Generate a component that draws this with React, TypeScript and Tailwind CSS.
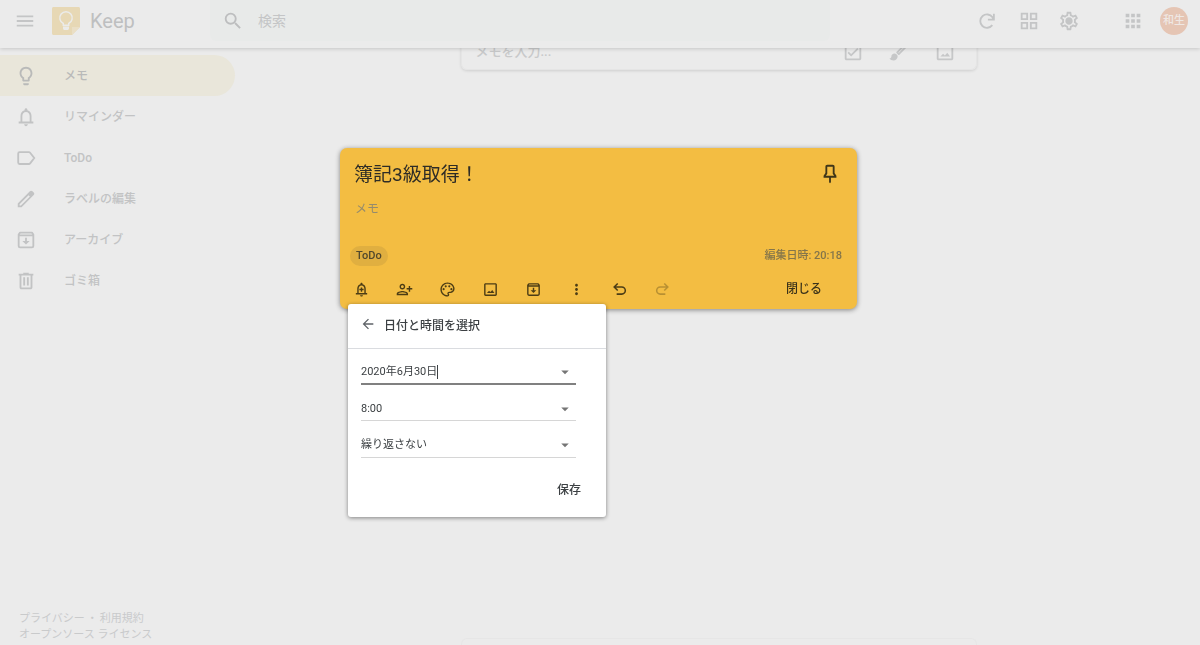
import type { ReactNode } from 'react';
import {
    MdApps,
    MdArrowBack,
    MdArrowDropDown,
    MdMenu,
    MdMoreVert,
    MdOutlineCheckBox,
    MdOutlineGridView,
    MdOutlinePalette,
    MdOutlinePersonAddAlt1,
    MdOutlineSettings,
    MdSearch
} from 'react-icons/md';

type IconProps = { size: number };

const Svg = ({ size, children }: IconProps & { children: ReactNode }) => (
    <svg width={size} height={size} viewBox="0 0 24 24" fill="currentColor" aria-hidden="true">
        {children}
    </svg>
);

const BulbIcon = ({ size }: IconProps) => (
    <Svg size={size}>
        <path d="M9 21c0 .5.4 1 1 1h4c.6 0 1-.5 1-1v-1H9v1zm3-19C8.1 2 5 5.1 5 9c0 2.4 1.2 4.5 3 5.7V17c0 .5.4 1 1 1h6c.6 0 1-.5 1-1v-2.3c1.8-1.3 3-3.4 3-5.7 0-3.9-3.1-7-7-7zm2.9 11.1l-.9.6V16h-4v-2.3l-.9-.6C7.8 12.2 7 10.6 7 9c0-2.8 2.2-5 5-5s5 2.2 5 5c0 1.6-.8 3.1-2.1 4.1z" />
    </Svg>
);

const bellPath = "M18 17v-6c0-3.07-1.63-5.64-4.5-6.32V4c0-.83-.67-1.5-1.5-1.5s-1.5.67-1.5 1.5v.68C7.64 5.36 6 7.92 6 11v6H4v2h16v-2h-2zm-2 0H8v-6c0-2.48 1.51-4.5 4-4.5s4 2.02 4 4.5v6zM10 20h4c0 1.1-.9 2-2 2s-2-.9-2-2z";

const BellIcon = ({ size }: IconProps) => (
    <Svg size={size}><path d={bellPath} /></Svg>
);

const BellPlusIcon = ({ size }: IconProps) => (
    <Svg size={size}>
        <path d={bellPath} />
        <path d="M13 9h-2v2H9v2h2v2h2v-2h2v-2h-2z" />
    </Svg>
);

const LabelIcon = ({ size }: IconProps) => (
    <Svg size={size}>
        <path d="M5 5.500h10.200c.6 0 1 .3 1.300.7L21 12l-4.500 5.800c-.3.4-.7.7-1.300.7H5c-.8 0-1.500-.7-1.500-1.500V7c0-.8.7-1.500 1.500-1.500z" fill="none" stroke="currentColor" strokeWidth="2" />
    </Svg>
);

const PencilIcon = ({ size }: IconProps) => (
    <Svg size={size}>
        <path d="M20.41 4.94l-1.35-1.35c-.78-.78-2.05-.78-2.83 0L3 16.82V21h4.18L20.41 7.77c.79-.78.79-2.05 0-2.83zm-14 14.12L5 19v-1.36l9.82-9.82 1.41 1.41-9.82 9.83z" />
    </Svg>
);

const ArchiveIcon = ({ size }: IconProps) => (
    <Svg size={size}>
        <path d="M5.500 4h13L20 6v12.500c0 .8-.7 1.500-1.500 1.500h-13c-.8 0-1.500-.7-1.500-1.500V6zM4 7h16" fill="none" stroke="currentColor" strokeWidth="2" strokeLinejoin="round" />
        <path d="M11 9.500h2V13h3l-4 4-4-4h3z" />
    </Svg>
);

const TrashIcon = ({ size }: IconProps) => (
    <Svg size={size}>
        <path d="M15 4V3H9v1H4v2h1v13c0 1.1.9 2 2 2h10c1.1 0 2-.9 2-2V6h1V4h-5zm2 15H7V6h10v13zM9 8h2v9H9zm4 0h2v9h-2z" />
    </Svg>
);

const PictureIcon = ({ size }: IconProps) => (
    <Svg size={size}>
        <path d="M19 5v14H5V5h14m0-2H5c-1.1 0-2 .9-2 2v14c0 1.1.9 2 2 2h14c1.1 0 2-.9 2-2V5c0-1.1-.9-2-2-2z" />
        <path d="M14.500 12.800l-2.700 2.900-1.900-1.900L7 17h10.500z" />
    </Svg>
);

const BrushIcon = ({ size }: IconProps) => (
    <Svg size={size}>
        <path d="M7 13.500c-1.900 0-3.300 1.500-3.300 3.300 0 1.400-1.200 2.200-2.200 2.200 1 1.300 2.700 2.200 4.500 2.200 2.500 0 4.500-2 4.500-4.400 0-1.800-1.600-3.300-3.500-3.300z" />
        <path d="M10 12.500L18.600 4l1.700 1.700-8.500 8.600z" fill="none" stroke="currentColor" strokeWidth="2" strokeLinejoin="round" />
    </Svg>
);

const PinIcon = ({ size }: IconProps) => (
    <Svg size={size}>
        <path d="M17 4v7l2 3v2h-6v5l-1 1-1-1v-5H5v-2l2-3V4c0-1.1.9-2 2-2h6c1.11 0 2 .89 2 2zM9 4v7.75L7.5 14h9L15 11.75V4H9z" />
    </Svg>
);

const RefreshIcon = ({ size }: IconProps) => (
    <Svg size={size}>
        <path d="M17.800 16.500A7.300 7.300 0 1 1 18 8l1 2M19.500 4v6.500H13" fill="none" stroke="currentColor" strokeWidth="2" />
    </Svg>
);

const UndoIcon = ({ size }: IconProps) => (
    <Svg size={size}>
        <path d="M9.500 3.500L4.500 8.500l5 5M5 8.500h10.200a5 5 0 0 1 0 10H8" fill="none" stroke="currentColor" strokeWidth="2.200" />
    </Svg>
);

const RedoIcon = ({ size }: IconProps) => (
    <Svg size={size}>
        <path d="M14.500 3.500l5 5-5 5M19 8.500H8.800a5 5 0 0 0 0 10H16" fill="none" stroke="currentColor" strokeWidth="2.200" />
    </Svg>
);

const GearIcon = ({ size }: IconProps) => (
    <span className="relative flex items-center justify-center">
        <MdOutlineSettings size={size} />
        <span className="absolute w-[6px] h-[6px] rounded-full bg-current"></span>
    </span>
);

const KeepLogo = () => (
    <svg width="28" height="28" viewBox="0 0 28 28" aria-hidden="true">
        <path d="M1.500 0h25c.8 0 1.500.7 1.500 1.500V20l-8 8H1.500C.7 28 0 27.300 0 26.500v-25C0 .7.700 0 1.500 0z" fill="#e7d8b5" />
        <path d="M20 28v-8h8z" fill="#eadfc6" />
        <path d="M11.300 18.300v-1.800a6.200 6.200 0 1 1 5.400 0v1.800z" fill="none" stroke="#ebebea" strokeWidth="1.500" />
        <path d="M11 19.500h6v1.700c0 1-.7 1.800-1.700 1.800h-2.600c-1 0-1.700-.8-1.700-1.800z" fill="#ebebea" />
    </svg>
);

const navItems = [
    { label: 'メモ', icon: BulbIcon },
    { label: 'リマインダー', icon: BellIcon },
    { label: 'ToDo', icon: LabelIcon },
    { label: 'ラベルの編集', icon: PencilIcon },
    { label: 'アーカイブ', icon: ArchiveIcon },
    { label: 'ゴミ箱', icon: TrashIcon },
];

const noteActions = [
    { label: 'リマインダーを追加', icon: BellPlusIcon },
    { label: '共同編集者', icon: MdOutlinePersonAddAlt1 },
    { label: '色を変更', icon: MdOutlinePalette },
    { label: '画像を追加', icon: PictureIcon },
    { label: 'アーカイブ', icon: ArchiveIcon },
    { label: 'その他のアクション', icon: MdMoreVert },
    { label: '元に戻す', icon: UndoIcon },
    { label: 'やり直す', icon: RedoIcon, disabled: true },
];

const Header = () => (
    <header className="relative z-10 h-12 shrink-0 flex items-start bg-[#ebebeb] text-[#c4c5c6] shadow-[0_1px_4px_rgba(0,0,0,0.16)]">
        <div className="w-[210px] h-[41px] shrink-0 flex items-center pl-[14px]">
            <button aria-label="メインメニュー"><MdMenu size={22} /></button>
            <a href="#" className="flex items-center gap-[10px] ml-4">
                <KeepLogo />
                <span className="text-[20px] leading-6 text-[#bebfc0]">Keep</span>
            </a>
        </div>
        <form className="flex-1 max-w-[620px] h-[41px] flex items-center gap-3 pl-3 bg-[#e8eae9] rounded-b-md">
            <button type="button" aria-label="検索を実行" className="text-[#bdbebf]"><MdSearch size={22} /></button>
            <input
                type="text"
                aria-label="検索"
                placeholder="検索"
                className="flex-1 min-w-0 pl-[2px] bg-transparent outline-none text-[14px] leading-5 placeholder:text-[#c4c5c6]"
            />
        </form>
        <div className="h-[41px] shrink-0 flex items-center ml-auto pr-3">
            <button aria-label="更新" className="mr-5"><RefreshIcon size={22} /></button>
            <button aria-label="ギャラリー表示" className="mr-[18px]"><MdOutlineGridView size={22} /></button>
            <button aria-label="設定" className="mr-[42px]"><GearIcon size={22} /></button>
            <button aria-label="アプリ" className="mr-4"><MdApps size={22} /></button>
            <button className="w-7 h-7 rounded-full bg-[#e5c5b4] text-[#efe8e4] text-[11px] leading-4 font-medium">和生</button>
        </div>
    </header>
);

const Sidebar = () => (
    <nav className="w-[237px] shrink-0 flex flex-col pt-[7px] pb-[2px]">
        {navItems.map((item, i) => {
            const Icon = item.icon;
            return (
                <a
                    key={item.label}
                    href="#"
                    className={`w-[235px] h-[41px] flex items-center gap-[27px] pl-[15px] rounded-r-full text-[12px] leading-4 font-medium ${i === 0 ? 'bg-[#e9e6da] text-[#b9bab9]' : 'text-[#c2c3c4]'}`}
                >
                    <Icon size={22} />
                    <span>{item.label}</span>
                </a>
            );
        })}
        <div className="mt-auto pl-[19px] text-[11px] leading-4 text-[#c9cacb]">
            <div className="flex">
                <a href="#">プライバシー</a>
                <span className="px-[2px]">・</span>
                <a href="#">利用規約</a>
            </div>
            <a href="#">オープンソース ライセンス</a>
        </div>
    </nav>
);

const ReminderMenu = () => (
    <div className="absolute left-2 top-[156px] w-[258px] bg-white rounded-[3px] text-[#3c4043] shadow-[0_1px_4px_rgba(0,0,0,0.45)]">
        <div className="h-[45px] flex items-center gap-2 pl-3 border-b border-[#dadce0]">
            <button aria-label="戻る" className="text-[#5f6368] pb-1"><MdArrowBack size={16} /></button>
            <h2 className="text-[12px] leading-4 font-medium">日付と時間を選択</h2>
        </div>
        <div className="flex flex-col pl-[13px] pr-[30px] pt-3 text-[11px] leading-4">
            <div className="h-6 flex items-center border-b-2 border-[#808080]">
                <input
                    aria-label="日付"
                    defaultValue="2020年6月30日"
                    className="field-sizing-content outline-none caret-transparent"
                />
                <span className="w-px h-[14px] bg-[#3c4043]"></span>
                <MdArrowDropDown size={18} className="ml-auto mr-[2px] text-[#757575]" />
            </div>
            <div className="relative mt-3 h-6 flex items-center border-b border-[#d6d6d6]">
                <select aria-label="時刻" className="appearance-none w-full outline-none">
                    <option>8:00</option>
                </select>
                <MdArrowDropDown size={18} className="absolute right-[2px] text-[#757575] pointer-events-none" />
            </div>
            <div className="relative mt-3 h-[25px] flex items-center border-b border-[#d6d6d6]">
                <select aria-label="繰り返し" className="appearance-none w-full outline-none">
                    <option>繰り返さない</option>
                </select>
                <MdArrowDropDown size={18} className="absolute right-[2px] text-[#757575] pointer-events-none" />
            </div>
        </div>
        <div className="flex justify-end pt-6 pb-[19px] pr-[25px]">
            <button className="text-[12px] leading-4 font-medium">保存</button>
        </div>
    </div>
);

const NoteDialog = () => (
    <div className="fixed inset-0 z-20 flex justify-center items-start pt-[148px] pl-4 pr-[19px]">
        <div role="dialog" className="relative w-full max-w-[517px] bg-[#f3bd42] rounded-[7px] shadow-[0_1px_5px_rgba(0,0,0,0.45)]">
            <div className="flex items-start justify-between pl-[14px] pr-4 pt-[15px]">
                <h1 className="text-[19px] leading-6 text-[#2e2c26]">簿記3級取得！</h1>
                <button aria-label="メモを固定" className="text-[#3f3618]"><PinIcon size={22} /></button>
            </div>
            <p className="pl-[15px] pt-[14px] text-[12px] leading-4 text-[#958b6d]">メモ</p>
            <div className="flex items-center justify-between pl-[10px] pr-[15px] mt-[29px] font-medium">
                <span className="h-5 flex items-center px-[6px] rounded-full bg-[#e0af40] text-[11px] leading-4 text-[#51482c]">ToDo</span>
                <span className="text-[11px] leading-4 text-[#84754a]">編集日時: 20:18</span>
            </div>
            <div className="flex items-center h-10 mt-[3px] text-[#4c3d15]">
                {noteActions.map(action => {
                    const Icon = action.icon;
                    return (
                        <button
                            key={action.label}
                            aria-label={action.label}
                            disabled={action.disabled}
                            className="w-[43px] flex justify-center disabled:opacity-35"
                        >
                            <Icon size={17} />
                        </button>
                    );
                })}
                <button className="ml-auto mr-[35px] text-[12px] leading-4 font-medium text-[#3a321a]">閉じる</button>
            </div>
            <ReminderMenu />
        </div>
    </div>
);

export default function App() {
    return (
        <div className="h-screen flex flex-col overflow-hidden bg-[#ebebeb] font-[Roboto,'Noto_Sans_CJK_JP',sans-serif]">
            <Header />
            <div className="flex-1 min-h-0 flex">
                <Sidebar />
                <main className="flex-1 min-w-0 flex flex-col items-center text-[#c6c7c8]">
                    {/* Composer, scrolled halfway under the header */}
                    <div className="w-full max-w-[516px] h-9 -mt-[14px] flex items-center pl-[14px] pr-5 gap-6 rounded-md border border-[#e5e5e5] shadow-[0_1px_3px_rgba(0,0,0,0.12)]">
                        <input
                            aria-label="メモを入力"
                            placeholder="メモを入力..."
                            className="flex-1 min-w-0 bg-transparent outline-none text-[13px] leading-4 font-medium placeholder:text-[#c8c9ca]"
                        />
                        <button aria-label="新しいリスト"><MdOutlineCheckBox size={22} /></button>
                        <button aria-label="図形描画"><BrushIcon size={22} /></button>
                        <button aria-label="画像付きの新しいメモ"><PictureIcon size={22} /></button>
                    </div>
                    <div className="mt-auto w-full max-w-[516px] h-[7px] rounded-t-md border border-b-0 border-[#e6e6e6]"></div>
                </main>
            </div>
            <NoteDialog />
        </div>
    );
}
